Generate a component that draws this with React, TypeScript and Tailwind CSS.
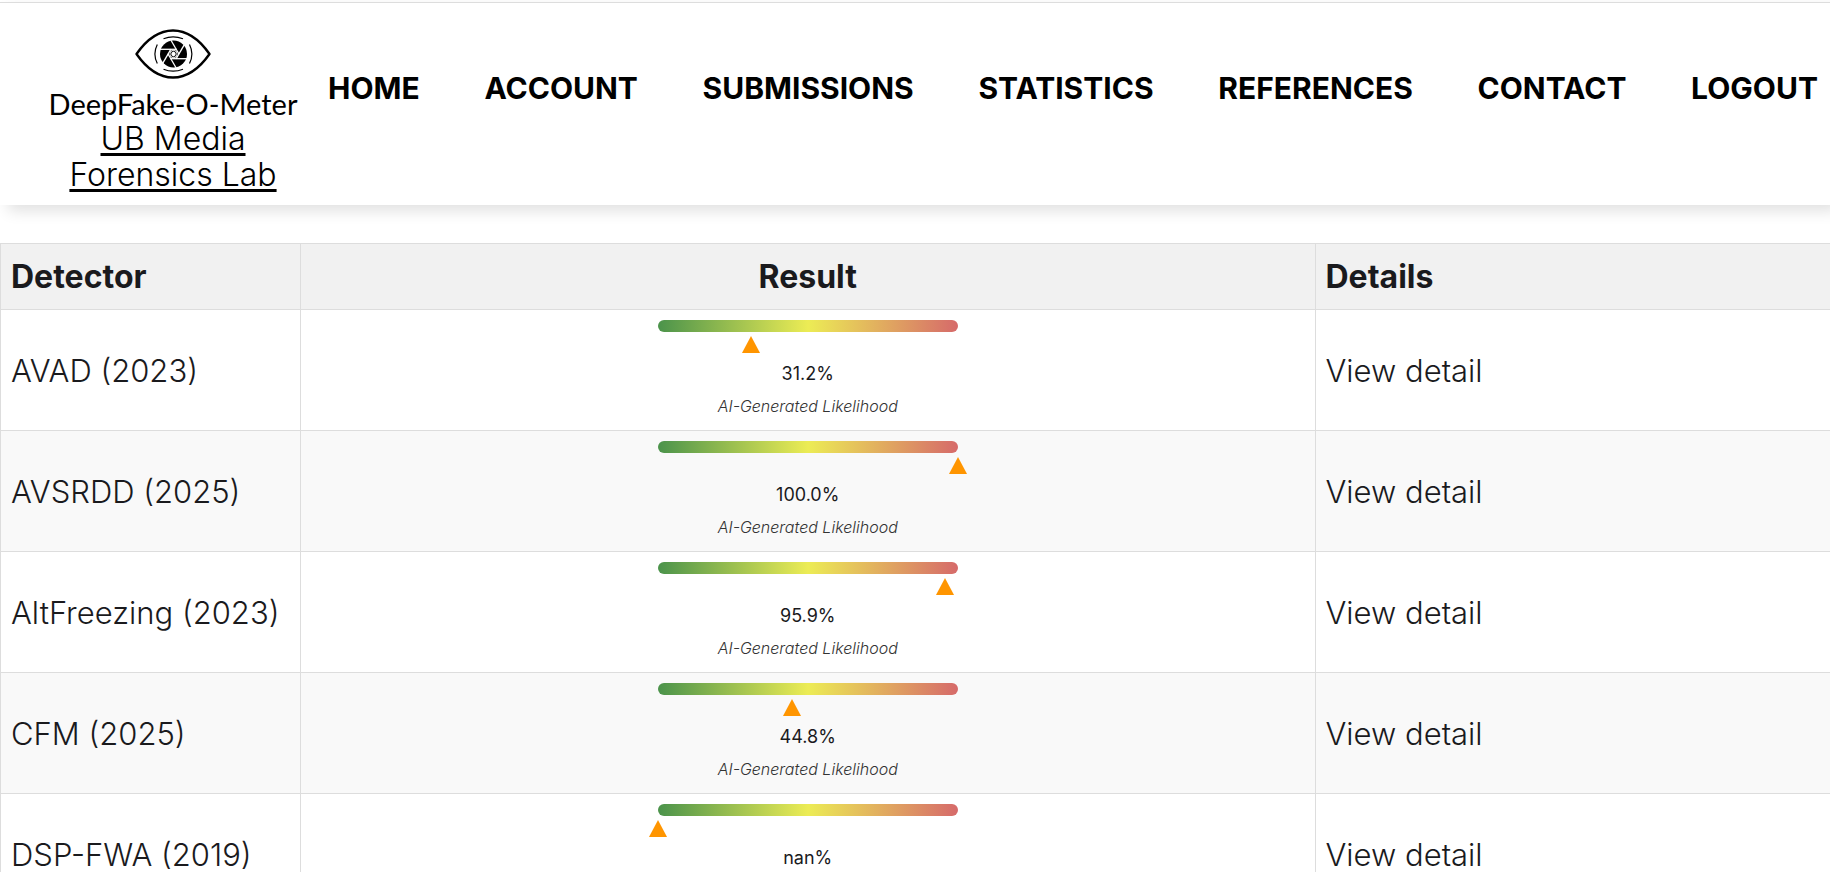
interface Detection {
  name: string;
  score: number | null;
}

const links = [
  "Home",
  "Account",
  "Submissions",
  "Statistics",
  "References",
  "Contact",
  "Logout",
];

const detections: Detection[] = [
  { name: "AVAD (2023)", score: 31.2 },
  { name: "AVSRDD (2025)", score: 100 },
  { name: "AltFreezing (2023)", score: 95.9 },
  { name: "CFM (2025)", score: 44.8 },
  { name: "DSP-FWA (2019)", score: null },
];

const EyeLogo = () => (
  <svg
    viewBox="0 0 76 50"
    className="w-[76px] h-[50px]"
    fill="none"
    stroke="#000"
    aria-hidden="true"
  >
    <path
      d="M1.5 25C12 10 24 1.5 38 1.5S64 10 74.5 25C64 40 52 48.5 38 48.5S12 40 1.5 25Z"
      strokeWidth="2.4"
      strokeLinejoin="round"
    />
    <path
      d="M28.5 9.800Q38 5.800 48 9.800M28.5 40.2Q38 44.2 48 40.2M22.3 15.5Q17.5 25 22.3 34.5M54.5 15.5Q59.3 25 54.5 34.5"
      strokeWidth="1.2"
    />
    <circle cx="38.5" cy="25" r="13.5" fill="#000" stroke="none" />
    <g stroke="#fff" strokeWidth="1.3">
      {[0, 60, 120, 180, 240, 300].map((angle) => (
        <path
          key={angle}
          d="M41.5 20.3H25"
          transform={`rotate(${angle} 38.5 25)`}
        />
      ))}
    </g>
    <circle cx="38.5" cy="25" r="3.9" fill="#fff" stroke="none" />
    <circle cx="38.5" cy="25" r="2.7" strokeWidth="1" />
  </svg>
);

const Header = () => (
  <header className="flex items-start border-t border-[#dddddd] bg-white pt-[26px] pb-3 pl-12 pr-3 text-black shadow-[8px_6px_14px_rgba(0,0,0,0.12)]">
    <div className="flex w-[250px] shrink-0 flex-col items-center text-center">
      <a href="#home" className="flex flex-col items-center">
        <EyeLogo />
        <span className="mt-2 font-[Lato,sans-serif] text-[29px] leading-[34px] whitespace-nowrap">
          DeepFake-O-Meter
        </span>
      </a>
      <a
        href="#lab"
        className="w-[220px] text-[32px] leading-9 font-light underline decoration-3 underline-offset-3"
      >
        UB Media Forensics Lab
      </a>
    </div>
    <nav className="ml-[30px] mt-[38px] flex-1">
      <ul className="flex justify-between">
        {links.map((link) => (
          <li key={link}>
            <a
              href={`#${link.toLowerCase()}`}
              className="text-[30px] leading-[42px] font-bold uppercase"
            >
              {link}
            </a>
          </li>
        ))}
      </ul>
    </nav>
  </header>
);

const Gauge = ({ score }: { score: number | null }) => (
  <div className="mx-auto w-[300px] pb-[2px] text-center">
    <div className="h-3 rounded-full bg-linear-to-r/srgb from-[#4b934b] via-[#ecec55] to-[#d66a6a]" />
    <div className="mt-1 h-[17px]">
      <svg
        viewBox="0 0 18 17"
        className="h-[17px] w-[18px] -translate-x-1/2"
        style={{ marginLeft: `${score ?? 0}%` }}
        aria-hidden="true"
      >
        <path d="M9 0L18 17H0Z" fill="#ff9500" />
      </svg>
    </div>
    <p className="mt-[9px] text-lg leading-6">
      {score === null ? "nan" : score.toFixed(1)}%
    </p>
    <p className="mt-2 text-base leading-6 font-light text-[#333333] italic">
      AI-Generated Likelihood
    </p>
  </div>
);

export default function App() {
  return (
    <div className="h-screen overflow-hidden bg-white pt-[2px] font-[Inter,sans-serif] text-[#1a1a1d]">
      <Header />
      <main className="mt-[38px]">
        <table className="w-full table-fixed border-collapse text-[31px] leading-[45px] font-light">
          <thead>
            <tr className="bg-[#f1f1f1] text-[32px] font-bold">
              <th className="w-[300px] border border-[#dddddd] p-[10px] text-left">
                Detector
              </th>
              <th className="border border-[#dddddd] p-[10px]">Result</th>
              <th className="w-[515px] border border-r-0 border-[#dddddd] p-[10px] text-left">
                Details
              </th>
            </tr>
          </thead>
          <tbody>
            {detections.map(({ name, score }) => (
              <tr key={name} className="even:bg-[#f9f9f9]">
                <td className="border border-[#dddddd] p-[10px] whitespace-nowrap">
                  {name}
                </td>
                <td className="border border-[#dddddd] p-[10px] font-normal">
                  <Gauge score={score} />
                </td>
                <td className="border border-r-0 border-[#dddddd] p-[10px]">
                  <a href="#detail">View detail</a>
                </td>
              </tr>
            ))}
          </tbody>
        </table>
      </main>
    </div>
  );
}
